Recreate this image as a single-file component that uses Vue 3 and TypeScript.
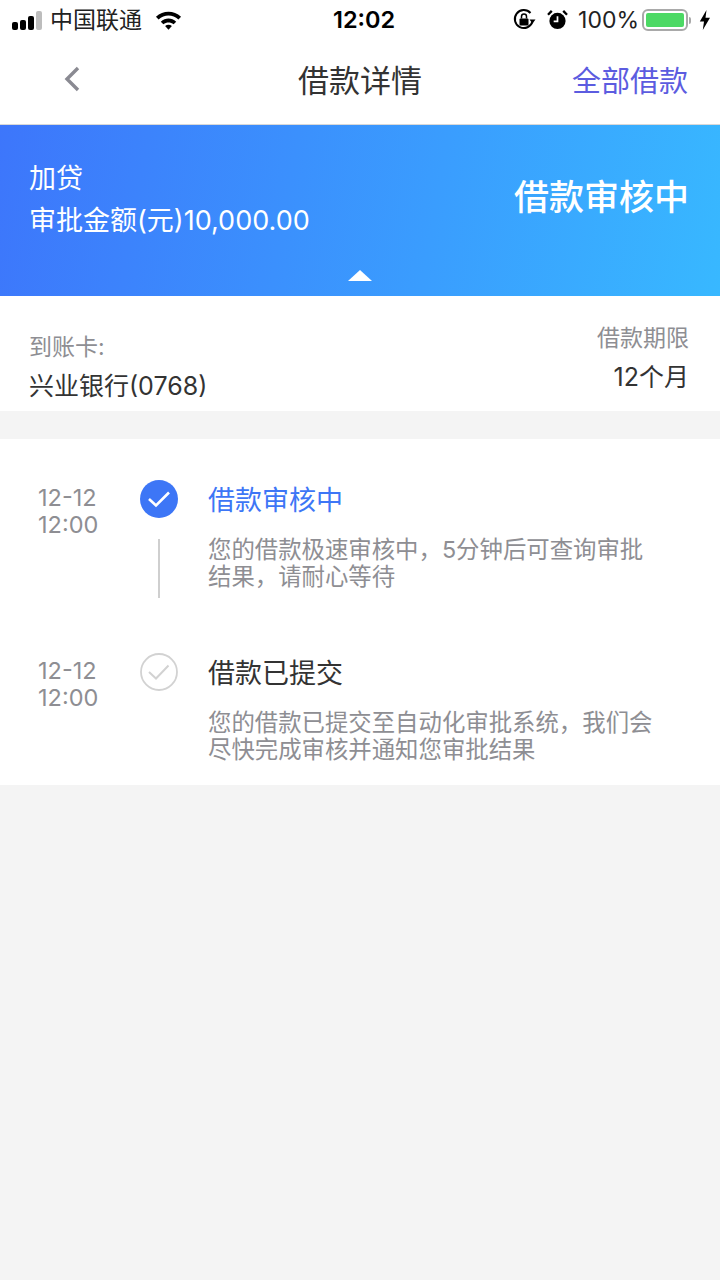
<script setup lang="ts">
interface Step {
  date: string;
  time: string;
  title: string;
  desc: string;
  active: boolean;
}

const steps: Step[] = [
  {
    date: "12-12",
    time: "12:00",
    title: "借款审核中",
    desc: "您的借款极速审核中，5分钟后可查询审批结果，请耐心等待",
    active: true,
  },
  {
    date: "12-12",
    time: "12:00",
    title: "借款已提交",
    desc: "您的借款已提交至自动化审批系统，我们会尽快完成审核并通知您审批结果",
    active: false,
  },
];
</script>

<template>
  <div class="page">
    <div class="status">
      <div class="status-left">
        <span class="signal"><i></i><i></i><i></i><i class="off"></i></span>
        <span class="carrier">中国联通</span>
        <svg class="wifi" width="27" height="20" viewBox="0 0 28 20">
          <path d="M1 6.5C8.5-.3 19.500-.3 27 6.500L24.300 9.400C18.300 4 9.700 4 3.700 9.400Z" fill="#000" />
          <path d="M6 11.700C10.800 7.500 17.200 7.500 22 11.700L19.300 14.500C16 11.800 12 11.800 8.700 14.500Z" fill="#000" />
          <path d="M10.500 16.200C12.600 14.600 15.400 14.600 17.500 16.200L14 20Z" fill="#000" />
        </svg>
      </div>
      <span class="clock">12:02</span>
      <div class="status-right">
        <svg class="lock" width="24" height="24" viewBox="0 0 24 24">
          <path d="M20.500 13.500A9 9 0 1 1 18.500 5" fill="none" stroke="#000" stroke-width="2" />
          <path d="M23.500 11.500H17.500L20.500 15.500Z" fill="#000" />
          <rect x="7.500" y="10.500" width="9" height="7" rx="1" fill="#000" />
          <path d="M9.500 10.500V8.500a2.500 2.500 0 0 1 5 0v2" fill="none" stroke="#000" stroke-width="1.500" />
        </svg>
        <svg class="alarm" width="21" height="20" viewBox="0 0 22 21">
          <circle cx="11" cy="11.500" r="8.500" fill="#000" />
          <path d="M11 6.500V12H7" fill="none" stroke="#fff" stroke-width="1.800" />
          <path d="M1 5 5 1M21 5 17 1" stroke="#000" stroke-width="2.500" />
        </svg>
        <span class="pct">100%</span>
        <span class="battery"><span class="level"></span></span>
        <span class="nub"></span>
        <svg width="12" height="20" viewBox="0 0 12 20">
          <path d="M7.500 0 .8 11.500H5L3.800 20 11 7.800H6.500Z" fill="#000" />
        </svg>
      </div>
    </div>

    <div class="nav">
      <svg class="back" width="18" height="26" viewBox="0 0 18 26">
        <path d="M15 2 4 13 15 24" fill="none" stroke="#8a8a92" stroke-width="3.400" />
      </svg>
      <span class="nav-title">借款详情</span>
      <span class="nav-link">全部借款</span>
    </div>

    <div class="banner">
      <div class="banner-left">
        <div>加贷</div>
        <div>审批金额(元)10,000.00</div>
      </div>
      <div class="banner-status">借款审核中</div>
      <span class="arrow"></span>
    </div>

    <div class="card-info">
      <div class="info-left">
        <div class="label">到账卡:</div>
        <div class="value">兴业银行(0768)</div>
      </div>
      <div class="info-right">
        <div class="label">借款期限</div>
        <div class="value">12个月</div>
      </div>
    </div>

    <div class="timeline">
      <div v-for="(step, i) in steps" :key="i" class="step">
        <div class="when">
          <div>{{ step.date }}</div>
          <div>{{ step.time }}</div>
        </div>
        <div class="rail">
          <svg v-if="step.active" width="39" height="39" viewBox="0 0 39 39">
            <circle cx="19" cy="19" r="19" fill="#3d76f6" />
            <path d="M9 19 16 25.500 29 12.500" fill="none" stroke="#fff" stroke-width="2.600" />
          </svg>
          <svg v-else width="39" height="39" viewBox="0 0 39 39">
            <circle cx="19" cy="19" r="18" fill="none" stroke="#d2d2d2" stroke-width="1.800" />
            <path d="M9 19 16 25.500 28.500 12.500" fill="none" stroke="#d2d2d2" stroke-width="2" />
          </svg>
          <span v-if="step.active" class="line"></span>
        </div>
        <div class="body">
          <div class="title" :class="{ blue: step.active }">{{ step.title }}</div>
          <div class="desc">{{ step.desc }}</div>
        </div>
      </div>
    </div>
  </div>
</template>

<style>
html,
body {
  margin: 0;
  background: #f4f4f4;
}
</style>

<style scoped>
.page {
  width: 720px;
  min-height: 1280px;
  background: #f4f4f4;
  font-family: Inter, "Noto Sans CJK SC", sans-serif;
  color: #333;
}

.status {
  height: 40px;
  background: #fff;
  display: flex;
  align-items: center;
  justify-content: space-between;
  padding: 0 9px 0 12px;
  position: relative;
  color: #000;
}

.status-left,
.status-right {
  display: flex;
  align-items: center;
}

.signal {
  display: flex;
  align-items: flex-end;
  gap: 2px;
  height: 19px;
  margin-right: 8px;
}

.signal i {
  width: 6px;
  border-radius: 2px;
  background: #000;
}

.signal i:nth-child(1) { height: 8px; }
.signal i:nth-child(2) { height: 10px; }
.signal i:nth-child(3) { height: 14px; }
.signal i:nth-child(4) { height: 19px; }
.signal i.off { background: #bdbdbd; }

.carrier {
  font-size: 23px;
  line-height: 40px;
  color: #222;
}

.wifi {
  margin-left: 13px;
}

.clock {
  position: absolute;
  left: 333px;
  font-size: 23.5px;
  font-weight: 600;
  line-height: 40px;
}

.lock {
  margin-right: -1px;
}

.alarm {
  margin-left: 12px;
}

.pct {
  font-size: 23px;
  margin-left: 10px;
  color: #222;
}

.battery {
  width: 46px;
  height: 22px;
  margin-left: 3px;
  border: 2px solid #a9a9a9;
  border-radius: 6px;
  padding: 2px;
  box-sizing: border-box;
  display: block;
}

.level {
  display: block;
  height: 100%;
  background: #4cd964;
  border-radius: 2px;
}

.nub {
  width: 2px;
  height: 7px;
  margin: 0 8px 0 1px;
  background: #a9a9a9;
  border-radius: 0 2px 2px 0;
}

.nav {
  height: 84px;
  background: #fff;
  border-bottom: 1px solid #d8d8d8;
  display: flex;
  align-items: center;
  justify-content: space-between;
  position: relative;
  padding: 0 32px 0 63px;
}

.back {
  margin-top: -6px;
}

.nav-title {
  position: absolute;
  left: 0;
  right: 0;
  top: 19px;
  text-align: center;
  font-size: 31px;
  line-height: 44px;
  color: #333;
}

.nav-link {
  font-size: 29px;
  line-height: 44px;
  color: #5c5ce0;
}

.banner {
  height: 171px;
  box-sizing: border-box;
  background: linear-gradient(100deg, #3d76fb 0%, #3a9dfe 60%, #38b8ff 100%);
  color: #fff;
  display: flex;
  justify-content: space-between;
  padding: 33px 31px 0 29px;
  position: relative;
}

.banner-left {
  font-size: 27px;
  line-height: 42px;
}

.banner-status {
  font-size: 35px;
  font-weight: 500;
  line-height: 80px;
  margin-top: -1px;
}

.arrow {
  position: absolute;
  left: 348px;
  bottom: 15px;
  width: 0;
  height: 0;
  border-left: 12px solid transparent;
  border-right: 12px solid transparent;
  border-bottom: 11px solid #fff;
}

.card-info {
  height: 115px;
  box-sizing: border-box;
  background: #fff;
  display: flex;
  justify-content: space-between;
  padding: 27px 31px 0 29px;
  font-size: 23px;
}

.info-left .label {
  margin-top: 8px;
}

.info-right {
  text-align: right;
  margin-top: -1px;
}

.label {
  color: #8e8e93;
  line-height: 32px;
}

.value {
  color: #333;
  font-size: 25px;
  line-height: 36px;
  margin-top: 5px;
}

.timeline {
  margin-top: 28px;
  background: #fff;
  padding-top: 41px;
}

.step {
  display: grid;
  grid-template-columns: 140px 68px 1fr;
  height: 173px;
}

.step:last-child {
  height: 132px;
}

.when {
  padding-left: 38px;
  font-size: 23.5px;
  line-height: 27px;
  color: #8e8e93;
  padding-top: 4px;
}

.rail {
  display: flex;
  flex-direction: column;
}

.line {
  width: 2px;
  height: 59px;
  margin: 20px 0 0 18px;
  background: #cfcfcf;
}

.title {
  font-size: 27px;
  line-height: 40px;
  color: #333;
  margin-top: 1px;
}

.title.blue {
  color: #3d76f6;
}

.desc {
  width: 448px;
  margin-top: 15px;
  font-size: 23.4px;
  line-height: 27px;
  color: #8e8e93;
}
</style>
